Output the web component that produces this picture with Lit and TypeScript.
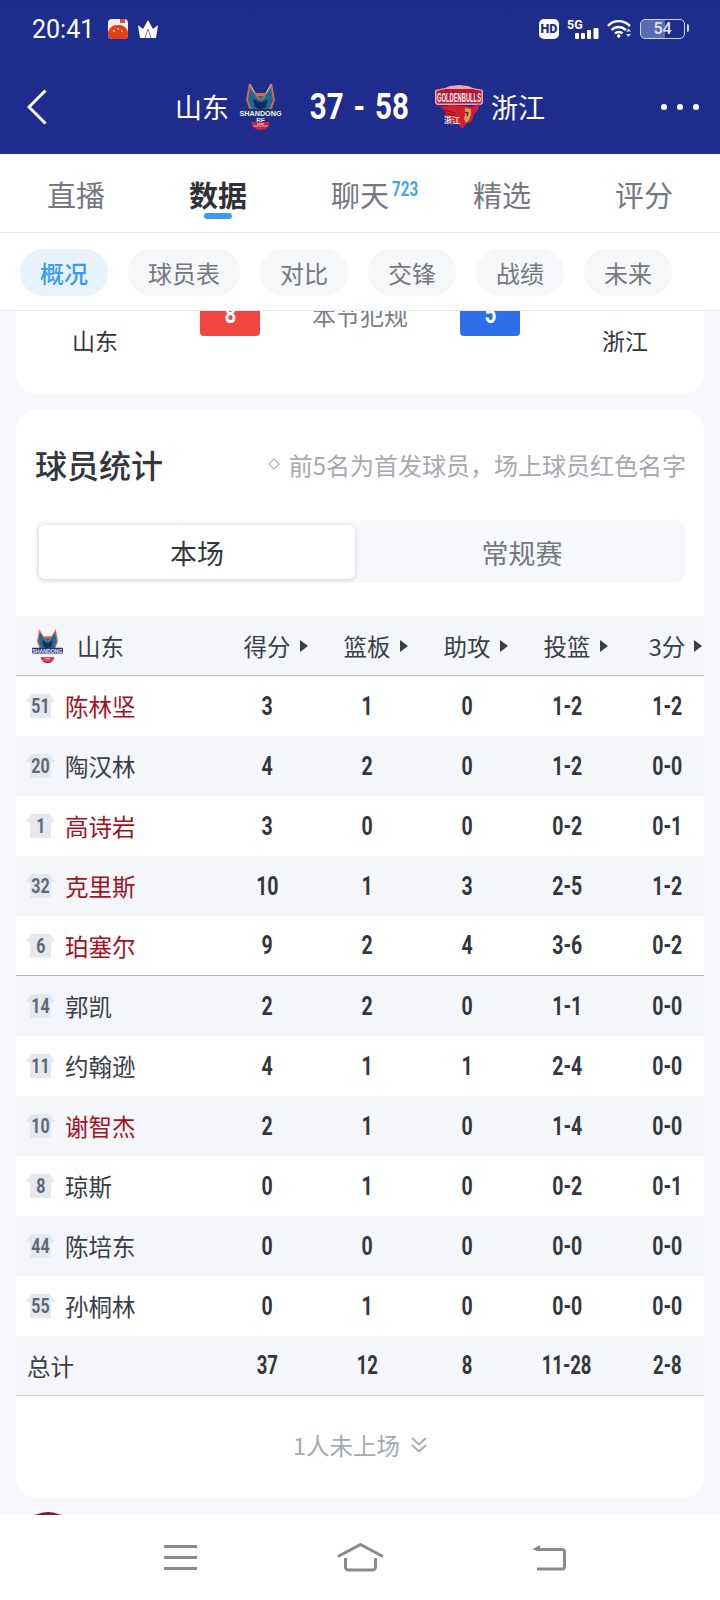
import {css, html, LitElement} from 'lit';
import {customElement} from 'lit/decorators.js';
import {classMap} from 'lit/directives/class-map.js';

type Player = {
  no: string;
  name: string;
  onCourt: boolean;
  stats: string[];
};

const players: Player[] = [
  {no: '51', name: '陈林坚', onCourt: true, stats: ['3', '1', '0', '1-2', '1-2']},
  {no: '20', name: '陶汉林', onCourt: false, stats: ['4', '2', '0', '1-2', '0-0']},
  {no: '1', name: '高诗岩', onCourt: true, stats: ['3', '0', '0', '0-2', '0-1']},
  {no: '32', name: '克里斯', onCourt: true, stats: ['10', '1', '3', '2-5', '1-2']},
  {no: '6', name: '珀塞尔', onCourt: true, stats: ['9', '2', '4', '3-6', '0-2']},
  {no: '14', name: '郭凯', onCourt: false, stats: ['2', '2', '0', '1-1', '0-0']},
  {no: '11', name: '约翰逊', onCourt: false, stats: ['4', '1', '1', '2-4', '0-0']},
  {no: '10', name: '谢智杰', onCourt: true, stats: ['2', '1', '0', '1-4', '0-0']},
  {no: '8', name: '琼斯', onCourt: false, stats: ['0', '1', '0', '0-2', '0-1']},
  {no: '44', name: '陈培东', onCourt: false, stats: ['0', '0', '0', '0-0', '0-0']},
  {no: '55', name: '孙桐林', onCourt: false, stats: ['0', '1', '0', '0-0', '0-0']},
];

const totals = ['37', '12', '8', '11-28', '2-8'];
const statHeads = ['得分', '篮板', '助攻', '投篮', '3分'];
const tabs = ['直播', '数据', '聊天', '精选', '评分'];
const chips = ['概况', '球员表', '对比', '交锋', '战绩', '未来'];

const shandongLogo = (w: number, h: number) => html`
  <svg width=${w} height=${h} viewBox="0 0 43 47">
    <path d="M10 0l6 10h11l6-10 3 17-4 11H11L7 17z" fill="#cf6a48" />
    <path d="M11 5l6 8h9l6-8 2 12-4 10H13L9 17z" fill="#1a6a9c" />
    <path d="M14 16l6 3h3l6-3-2 8-5.500 3-5.500-3z" fill="#0e2f5f" />
    <path d="M17 13l4 4M26 13l-4 4" stroke="#e9603c" stroke-width="1.400" />
    <path d="M11 1l5 9M32 1l-5 9" stroke="#dfe3f2" stroke-width=".8" />
    <rect x="0" y="26" width="43" height="8" rx="1" fill="#22306f" />
    <text x="21.500" y="33" text-anchor="middle" font-family="Liberation Sans" font-weight="700" font-size="8" fill="#eef0fa" textLength="42" lengthAdjust="spacingAndGlyphs">SHANDONG</text>
    <text x="21.500" y="40" text-anchor="middle" font-family="Liberation Sans" font-weight="700" font-size="6.500" fill="#dfe3f2">BF</text>
    <path d="M12 39h19c-1 5-4.500 8-9.500 8S13 44 12 39z" fill="#c5283d" />
    <path d="M14 43h15" stroke="#f1c3c8" stroke-width=".8" />
    <path d="M18 41h7" stroke="#dfe3f2" stroke-width="1" />
  </svg>
`;

const zhejiangLogo = (w: number, h: number, edge = '#f0a3b0') => html`
  <svg width=${w} height=${h} viewBox="0 0 48 44">
    <path d="M0 5l10-2 5-2 9-1 9 1 5 2 10 2v13l-2 2H2l-2-2z" fill=${edge} />
    <path d="M1.500 6l9-2h27l9 2v11l-1 1.500H2.500L1.500 17z" fill="#b51a35" />
    <text x="24" y="16.500" text-anchor="middle" font-family="Liberation Sans" font-weight="700" font-size="13" fill="#fdeef0" textLength="44" lengthAdjust="spacingAndGlyphs">GOLDENBULLS</text>
    <path d="M5 22l10-2 14 1 8 1 7-3-1 6-4 4-2 7-6 3-4 5-4-6-7-1-1-4-6-1 2-5z" fill="#d3202f" />
    <path d="M30 23l6 1 0 6-2 5-3 3-2-4 1-5z" fill="#dc9a58" />
    <path d="M33 27l-1 4M30 27l2 1" stroke="#6e1210" stroke-width="1.200" />
    <path d="M9 25l11 3M11 29l9 1" stroke="#8d1420" stroke-width="1" />
    <text x="17" y="38" text-anchor="middle" font-family="Noto Sans CJK SC" font-weight="700" font-size="8" fill="#f6d9d9">浙江</text>
  </svg>
`;

@customElement('app-root')
export class AppRoot extends LitElement {
  static override styles = css`
    :host {
      display: block;
      width: 720px;
      height: 1600px;
      overflow: hidden;
      background: #f6f8fb;
      font-family: 'Noto Sans CJK SC', 'Liberation Sans', sans-serif;
      color: #33363c;
    }

    .head {
      height: 154px;
      background: linear-gradient(#1e2d8b, #202c8e);
      color: #fff;
      display: flex;
      flex-direction: column;
    }
    .status {
      height: 58px;
      display: flex;
      align-items: center;
      padding: 0 32px;
      font-family: Roboto, sans-serif;
    }
    .time {
      font-size: 25px;
      width: 76px;
    }
    .crown {
      margin-left: 10px;
    }
    .sys {
      margin-left: auto;
      display: flex;
      align-items: center;
      gap: 8px;
    }
    .hd {
      width: 20px;
      height: 20px;
      border-radius: 5px;
      background: #fff;
      color: #1f2c8d;
      font-size: 12.5px;
      font-weight: 900;
      line-height: 20px;
      text-align: center;
    }
    .battery {
      position: relative;
      width: 45px;
      height: 20px;
      box-sizing: border-box;
      border: 1.5px solid #cfd5ee;
      border-radius: 5px;
      background: linear-gradient(90deg, #5a6bb3 24px, transparent 24px);
      color: #dfe4f5;
      font-size: 16px;
      font-weight: 500;
      line-height: 17px;
      text-align: center;
      margin-right: 3px;
    }
    .battery::after {
      content: '';
      position: absolute;
      right: -5px;
      top: 4px;
      width: 2px;
      height: 8px;
      border-radius: 0 2px 2px 0;
      background: #cfd5ee;
    }
    .match {
      flex: 1;
      display: flex;
      align-items: center;
      padding: 1px 21px 0 27px;
    }
    .back {
      width: 148px;
      display: flex;
    }
    .teamname {
      font-size: 27px;
      line-height: 36px;
    }
    .score {
      width: 97px;
      display: flex;
      justify-content: center;
      font-family: Roboto, sans-serif;
      font-weight: 700;
      font-size: 36px;
      word-spacing: 3px;
      white-space: nowrap;
    }
    .score span {
      display: inline-block;
      transform: scaleX(0.82);
    }
    .logo-l {
      margin: 0 29px 0 10px;
      display: flex;
    }
    .logo-r {
      margin: 0 8px 0 27px;
      display: flex;
    }
    .dots {
      margin-left: auto;
      display: flex;
      gap: 10px;
    }
    .dots i {
      width: 6px;
      height: 6px;
      border-radius: 50%;
      background: #fff;
    }

    .tabs {
      height: 78px;
      background: #fff;
      border-bottom: 1px solid #e9eaec;
      display: grid;
      grid-template-columns: repeat(5, 142px);
      padding: 0 5px;
    }
    .tab {
      display: flex;
      flex-direction: column;
      align-items: center;
      padding-top: 22px;
      font-size: 29px;
      line-height: 37px;
      color: #75787e;
    }
    .tab.on {
      color: #2f3136;
      font-weight: 700;
    }
    .tab .bar {
      width: 28px;
      height: 6px;
      border-radius: 3px;
      background: #3a9bf0;
    }
    .tab-label {
      position: relative;
    }
    .tab-count {
      position: absolute;
      left: calc(100% + 3px);
      top: 3px;
      font-family: Roboto, sans-serif;
      font-weight: 700;
      font-size: 20px;
      line-height: 20px;
      color: #48a4ea;
      transform: scaleX(0.76);
      transform-origin: left center;
    }

    .chips {
      position: relative;
      height: 78px;
      box-sizing: border-box;
      background: #fff;
      border-bottom: 1px solid #e9eaec;
      display: flex;
      gap: 20px;
      padding: 16px 0 0 20px;
    }
    .chip {
      height: 47px;
      padding: 0 20px;
      border-radius: 24px;
      background: #f6f7f9;
      color: #75787e;
      font-size: 24px;
      line-height: 47px;
    }
    .chip.on {
      background: #e8f3fd;
      color: #3a9bf0;
      font-weight: 500;
    }

    .scroll {
      height: 1204px;
      overflow: hidden;
      display: flex;
      flex-direction: column;
      gap: 16px;
      padding: 0 16px;
    }
    .card {
      background: #fff;
      border-radius: 20px;
      flex: none;
    }
    .fouls {
      margin-top: -19px;
      padding-bottom: 39px;
      display: grid;
      grid-template-columns: 1fr 60px 200px 60px 1fr;
      border-radius: 0 0 20px 20px;
      align-items: start;
      text-align: center;
    }
    .fouls .side {
      font-size: 23px;
      line-height: 30px;
      margin-top: 33px;
      color: #33363c;
    }
    .fouls .side.l {
      padding-right: 26px;
    }
    .fouls .side.r {
      padding-left: 26px;
    }
    .fouls .count {
      height: 44px;
      border-radius: 0 0 4px 4px;
      color: #fff;
      font-family: Roboto, sans-serif;
      font-weight: 700;
      font-size: 26px;
      line-height: 44px;
    }
    .count span {
      display: inline-block;
      transform: scaleX(0.8);
    }
    .count.red {
      background: #f04540;
    }
    .count.blue {
      background: #2c6fe8;
    }
    .fouls .mid {
      font-size: 24px;
      line-height: 30px;
      margin-top: 8px;
      color: #7a7d85;
    }

    .players {
      overflow: hidden;
    }
    .title-row {
      display: flex;
      align-items: center;
      justify-content: space-between;
      padding: 34px 18px 0 19px;
      height: 40px;
    }
    .title {
      font-size: 32px;
      line-height: 40px;
      font-weight: 500;
      color: #33363c;
    }
    .note {
      display: flex;
      align-items: center;
      gap: 11px;
      font-size: 24px;
      color: #a5a9b0;
    }
    .diamond {
      width: 6px;
      height: 6px;
      border: 1.5px solid #a5a9b0;
      transform: rotate(45deg);
    }
    .segment {
      margin: 36px 19px 33px;
      height: 63px;
      box-sizing: border-box;
      padding: 5px 4px;
      border-radius: 10px;
      background: #f6f8fb;
      display: flex;
      align-items: flex-start;
      font-size: 27px;
      line-height: 56px;
      text-align: center;
      color: #75787e;
    }
    .segment .on {
      width: 316px;
      height: 54px;
      background: #fff;
      border-radius: 6px;
      color: #33363c;
      box-shadow: 0 1px 4px rgba(60, 70, 90, 0.22);
    }
    .segment .off {
      flex: 1;
      padding-left: 8px;
    }

    .row {
      height: 60px;
      box-sizing: border-box;
      display: grid;
      grid-template-columns: 201px repeat(5, 100px);
      align-items: center;
      font-size: 23.5px;
      background: #fff;
    }
    .row.alt {
      background: #f5f6f9;
    }
    .row.line {
      border-bottom: 1px solid #b4b4b4;
    }
    .row.line-soft {
      border-bottom: 1px solid #cdcdcd;
    }
    .who {
      display: flex;
      align-items: center;
      padding-left: 10px;
      gap: 10px;
      color: #3a3d45;
    }
    .who.red {
      color: #a3121d;
    }
    .jersey {
      width: 29px;
      height: 24px;
      flex: none;
      background: #e5e8ee;
      clip-path: polygon(0 30%, 20% 0, 80% 0, 100% 30%, 86% 38%, 86% 100%, 14% 100%, 14% 38%);
      color: #5e667c;
      font-family: Roboto, sans-serif;
      font-weight: 700;
      font-size: 20px;
      line-height: 24px;
      text-align: center;
    }
    .jersey span {
      display: inline-block;
      transform: scaleX(0.8);
    }
    .num {
      text-align: center;
      font-family: Roboto, sans-serif;
      font-weight: 700;
      font-size: 25px;
      color: #33363c;
    }
    .num span {
      display: inline-block;
      transform: scaleX(0.78);
    }
    .num.sum span {
      transform: scaleX(0.74);
    }
    .th-team {
      display: flex;
      align-items: center;
      gap: 14px;
      padding-left: 16px;
      color: #3a3f47;
    }
    .th {
      text-align: center;
      color: #3a3f47;
    }
    .th span {
      position: relative;
    }
    .th span::after {
      content: '';
      position: absolute;
      left: calc(100% + 9px);
      top: 50%;
      margin-top: -6px;
      border-left: 8px solid #3a3f47;
      border-top: 6px solid transparent;
      border-bottom: 6px solid transparent;
    }
    .total-label {
      padding-left: 11px;
      color: #3a3d45;
    }
    .more {
      height: 97px;
      padding-bottom: 5px;
      display: flex;
      align-items: center;
      justify-content: center;
      gap: 11px;
      font-size: 23.5px;
      color: #a5a9b0;
    }
    .next-logo {
      flex: none;
      margin: -2px 0 0 15px;
      display: flex;
    }

    .nav {
      height: 85px;
      background: #fff;
      display: flex;
      align-items: center;
      padding-left: 164px;
    }
    .nav .home {
      margin: 0 148px 0 140px;
    }
  `;

  private renderTabs() {
    return html`
      <div class="tabs">
        ${tabs.map(
          (t, i) => html`
            <div class=${classMap({tab: true, on: i === 1})}>
              <span class="tab-label">
                ${t}${i === 2 ? html`<span class="tab-count">723</span>` : ''}
              </span>
              ${i === 1 ? html`<span class="bar"></span>` : ''}
            </div>
          `
        )}
      </div>
    `;
  }

  private renderStatus() {
    return html`
      <div class="status">
        <span class="time">20:41</span>
        <svg width="20" height="20" viewBox="0 0 20 20">
          <rect width="20" height="20" rx="4" fill="#f7efe9" />
          <rect x="12" y="0" width="5" height="4" fill="#c9583a" />
          <path d="M0 13c2-6 6-7 10-7s8 1 10 7v3a4 4 0 0 1-4 4H4a4 4 0 0 1-4-4z" fill="#e2401c" />
          <circle cx="6" cy="12" r="1" fill="#ffd9a8" />
          <circle cx="10" cy="10" r="1" fill="#ffd9a8" />
          <circle cx="14" cy="12" r="1" fill="#ffd9a8" />
        </svg>
        <svg class="crown" width="20" height="18" viewBox="0 0 20 18">
          <path d="M0 5l5 4 5-9 5 9 5-4-2 13H2z" fill="#fff" />
          <path d="M10 9l-3 9M10 9l3 9" stroke="#1f2c8d" stroke-width=".6" />
        </svg>
        <div class="sys">
          <span class="hd">HD</span>
          <svg width="32" height="20" viewBox="0 0 32 20">
            <text x="0" y="10" font-family="Roboto" font-weight="700" font-size="12.500" fill="#fff">5G</text>
            <rect x="8" y="14" width="4" height="6" rx="1" fill="#fff" />
            <rect x="14" y="14" width="4" height="6" rx="1" fill="#fff" />
            <rect x="20" y="11" width="4" height="9" rx="1" fill="#fff" />
            <rect x="26.500" y="9" width="5" height="11" rx="1" fill="#fff" />
          </svg>
          <svg width="25" height="18" viewBox="0 0 25 18">
            <path d="M1 6c6-6.500 15-6.500 22 0" fill="none" stroke="#fff" stroke-width="2.400" />
            <path d="M4.500 10c4-4 10-4 14.500 0" fill="none" stroke="#fff" stroke-width="2.400" />
            <path d="M8 13.500c2-2 5.500-2 7.500 0" fill="none" stroke="#fff" stroke-width="2.400" />
            <circle cx="11.700" cy="16" r="1.800" fill="#fff" />
            <path d="M19 11.500l2.500-3 2.500 3zM19 14l2.500 3 2.500-3z" fill="#d8ddf0" />
          </svg>
          <span class="battery">54</span>
        </div>
      </div>
    `;
  }

  private renderPlayer(p: Player, i: number) {
    return html`
      <div class=${classMap({row: true, alt: i % 2 === 1, line: i === 4})}>
        <div class=${classMap({who: true, red: p.onCourt})}>
          <span class="jersey"><span>${p.no}</span></span>
          <span>${p.name}</span>
        </div>
        ${p.stats.map((s) => html`<div class="num"><span>${s}</span></div>`)}
      </div>
    `;
  }

  override render() {
    return html`
      <div class="head">
        ${this.renderStatus()}
        <div class="match">
          <div class="back">
            <svg width="20" height="36" viewBox="0 0 20 36">
              <path d="M18.500 1.500L2 18l16.500 16.500" fill="none" stroke="#fff" stroke-width="3" />
            </svg>
          </div>
          <span class="teamname">山东</span>
          <span class="logo-l">${shandongLogo(43, 47)}</span>
          <span class="score"><span>37 - 58</span></span>
          <span class="logo-r">${zhejiangLogo(48, 44)}</span>
          <span class="teamname">浙江</span>
          <div class="dots"><i></i><i></i><i></i></div>
        </div>
      </div>

      ${this.renderTabs()}

      <div class="chips">
        ${chips.map(
          (c, i) => html`<span class=${classMap({chip: true, on: i === 0})}>${c}</span>`
        )}
      </div>

      <div class="scroll">
        <div class="card fouls">
          <div class="side l">山东</div>
          <div class="count red"><span>8</span></div>
          <div class="mid">本节犯规</div>
          <div class="count blue"><span>5</span></div>
          <div class="side r">浙江</div>
        </div>

        <div class="card players">
          <div class="title-row">
            <span class="title">球员统计</span>
            <span class="note">
              <i class="diamond"></i>
              前5名为首发球员，场上球员红色名字
            </span>
          </div>
          <div class="segment">
            <div class="on">本场</div>
            <div class="off">常规赛</div>
          </div>

          <div class="row alt line">
            <div class="th-team">${shandongLogo(31, 34)}<span>山东</span></div>
            ${statHeads.map((h) => html`<div class="th"><span>${h}</span></div>`)}
          </div>
          ${players.map((p, i) => this.renderPlayer(p, i))}
          <div class="row alt line-soft">
            <div class="total-label">总计</div>
            ${totals.map((s) => html`<div class="num sum"><span>${s}</span></div>`)}
          </div>
          <div class="more">
            <span>1人未上场</span>
            <svg width="16" height="16" viewBox="0 0 16 16">
              <path d="M1 1l7 6.500L15 1M1 8l7 6.500L15 8" fill="none" stroke="#a5a9b0" stroke-width="1.800" />
            </svg>
          </div>
        </div>

        <div class="next-logo">${zhejiangLogo(34, 31, '#7a1a2a')}</div>
      </div>

      <div class="nav">
        <svg width="33" height="25" viewBox="0 0 33 25">
          <path d="M0 1.500h33M0 12.500h33M0 23.500h33" stroke="#8a8a8a" stroke-width="3" />
        </svg>
        <svg class="home" width="47" height="29" viewBox="0 0 47 29">
          <path d="M1 13.500L23.500 1.500 46 13.500" fill="none" stroke="#8a8a8a" stroke-width="3" stroke-linejoin="round" />
          <path d="M8.500 15v9a3 3 0 0 0 3 3h24a3 3 0 0 0 3-3v-9" fill="none" stroke="#8a8a8a" stroke-width="3" />
        </svg>
        <svg width="34" height="26" viewBox="0 0 34 26">
          <path d="M4 4.500h26a2.500 2.500 0 0 1 2.500 2.500v14.500a2.500 2.500 0 0 1-2.500 2.500H5" fill="none" stroke="#8a8a8a" stroke-width="3" />
          <path d="M0 4.500L8 0v6z" fill="#8a8a8a" />
        </svg>
      </div>
    `;
  }
}
